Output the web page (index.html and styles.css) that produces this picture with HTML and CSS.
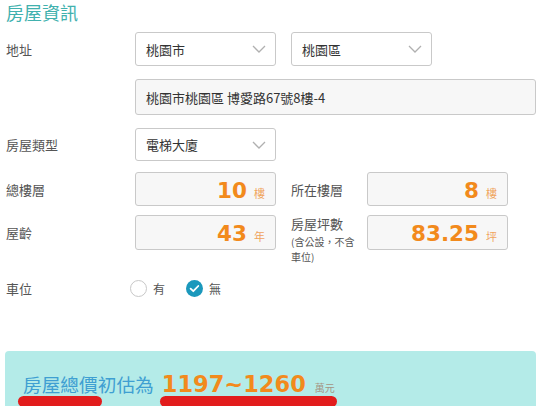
FILE: index.html
```html
<!DOCTYPE html>
<html lang="zh-Hant">
<head>
<meta charset="utf-8">
<title>房屋資訊</title>
<link rel="stylesheet" href="styles.css">
</head>
<body>
<div class="page">
  <h2 class="title">房屋資訊</h2>

  <div class="row r1">
    <div class="label">地址</div>
    <div class="select"><span>桃園市</span><svg class="chev" width="14" height="8" viewBox="0 0 14 8"><path d="M1 1 L7 7 L13 1" fill="none" stroke="#b0b0b0" stroke-width="1.3"/></svg></div>
    <div class="select ml15"><span>桃園區</span><svg class="chev" width="14" height="8" viewBox="0 0 14 8"><path d="M1 1 L7 7 L13 1" fill="none" stroke="#b0b0b0" stroke-width="1.3"/></svg></div>
  </div>

  <div class="row r2">
    <div class="label"></div>
    <div class="input wide">桃園市桃園區 博愛路67號8樓-4</div>
  </div>

  <div class="row r3">
    <div class="label">房屋類型</div>
    <div class="select"><span>電梯大廈</span><svg class="chev" width="14" height="8" viewBox="0 0 14 8"><path d="M1 1 L7 7 L13 1" fill="none" stroke="#b0b0b0" stroke-width="1.3"/></svg></div>
  </div>

  <div class="row r4">
    <div class="label">總樓層</div>
    <div class="input num"><span class="val">10</span><span class="unit">樓</span></div>
    <div class="label2">所在樓層</div>
    <div class="input num"><span class="val">8</span><span class="unit">樓</span></div>
  </div>

  <div class="row r5">
    <div class="label">屋齡</div>
    <div class="input num"><span class="val">43</span><span class="unit">年</span></div>
    <div class="label2 top">
      <div>房屋坪數</div>
      <div class="sub">(含公設，不含車位)</div>
    </div>
    <div class="input num"><span class="val">83.25</span><span class="unit">坪</span></div>
  </div>

  <div class="row r6">
    <div class="label">車位</div>
    <div class="radios">
      <span class="radio"></span><span class="rtext">有</span>
      <span class="radio checked"><svg width="17" height="17" viewBox="0 0 17 17"><path d="M4.6 8.6 L7.3 11.2 L12.3 6" fill="none" stroke="#fff" stroke-width="1.8" stroke-linecap="round" stroke-linejoin="round"/></svg></span><span class="rtext">無</span>
    </div>
  </div>

  <div class="result">
    <span class="rlabel">房屋總價初估為</span>
    <span class="rval">1197~1260</span>
    <span class="runit">萬元</span>
    <span class="mark m1"></span>
    <span class="mark m2"></span>
  </div>
</div>
</body>
</html>
```

FILE: styles.css
```css
* { box-sizing: border-box; }
html, body { margin: 0; padding: 0; background: #fff; }
body {
  font-family: "Noto Sans CJK TC", "Noto Sans", sans-serif;
  color: #555;
  font-size: 13px;
  width: 547px;
  height: 406px;
  overflow: hidden;
}
.page { padding-left: 6px; }
.title {
  margin: 0;
  font-size: 18px;
  font-weight: 400;
  line-height: 25px;
  color: #41b1ae;
  height: 25px;
}
.row { display: flex; align-items: center; }
.r1 { margin-top: 7px; height: 34px; }
.r2 { margin-top: 13px; height: 36px; }
.r3 { margin-top: 13px; height: 33px; }
.r4 { margin-top: 11px; height: 34px; }
.r5 { margin-top: 9px; height: 35px; align-items: flex-start; }
.r5 .label, .r5 .input { align-self: center; }
.r6 { margin-top: 30px; height: 16px; }
.label { width: 129px; flex: none; color: #555; }
.label2 { width: 76px; flex: none; margin-left: 15px; color: #555; }
.label2.top { padding-top: 1px; line-height: 16px; }
.sub { font-size: 10px; line-height: 15px; width: 68px; margin-top: 2px; }
.select {
  width: 141px;
  height: 100%;
  border: 1px solid #c9c9c9;
  border-radius: 3px;
  background: #fff;
  display: flex;
  align-items: center;
  justify-content: space-between;
  padding: 0 9px 0 10px;
  color: #333;
  flex: none;
}
.ml15 { margin-left: 15px; }
.chev { display: block; }
.input {
  height: 100%;
  border: 1px solid #c9c9c9;
  border-radius: 3px;
  background: #f7f7f7;
  display: flex;
  align-items: center;
  padding: 0 10px;
  color: #333;
  flex: none;
}
.wide { width: 401px; }
.num {
  width: 141px;
  justify-content: flex-end;
  align-items: baseline;
  padding-top: 2px;
  line-height: 32px;
}
.val {
  font-family: "DejaVu Sans", sans-serif;
  font-weight: 700;
  font-size: 21.5px;
  color: #f28a1c;
}
.unit {
  font-size: 11px;
  color: #f0a45c;
  margin-left: 7px;
}
.radios { display: flex; align-items: center; margin-left: -5px; }
.radio {
  width: 17px;
  height: 17px;
  border-radius: 50%;
  border: 1px solid #c8c8c8;
  background: #fff;
  display: inline-block;
}
.radio.checked { border: none; background: #1b98bc; }
.radio svg { display: block; }
.rtext { margin-left: 6px; margin-right: 21px; color: #555; font-size: 12px; }
.result {
  position: relative;
  margin-top: 55px;
  margin-left: -1px;
  width: 531px;
  height: 60px;
  background: #b4ebe8;
  border-radius: 4px 4px 0 0;
  padding: 19px 0 0 18px;
  line-height: 28px;
  white-space: nowrap;
}
.rlabel { font-size: 18.7px; color: #3f9fd2; }
.rval {
  font-family: "DejaVu Sans", sans-serif;
  font-weight: 700;
  font-size: 22.5px;
  color: #f28a1c;
  margin-left: 5px;
}
.runit { font-size: 10px; color: #a49484; margin-left: 6px; }
.mark {
  position: absolute;
  top: 45px;
  height: 11px;
  border-radius: 6px;
  background: #e21c1c;
}
.m1 { left: 13px; width: 84px; }
.m2 { left: 155px; width: 177px; }
```
